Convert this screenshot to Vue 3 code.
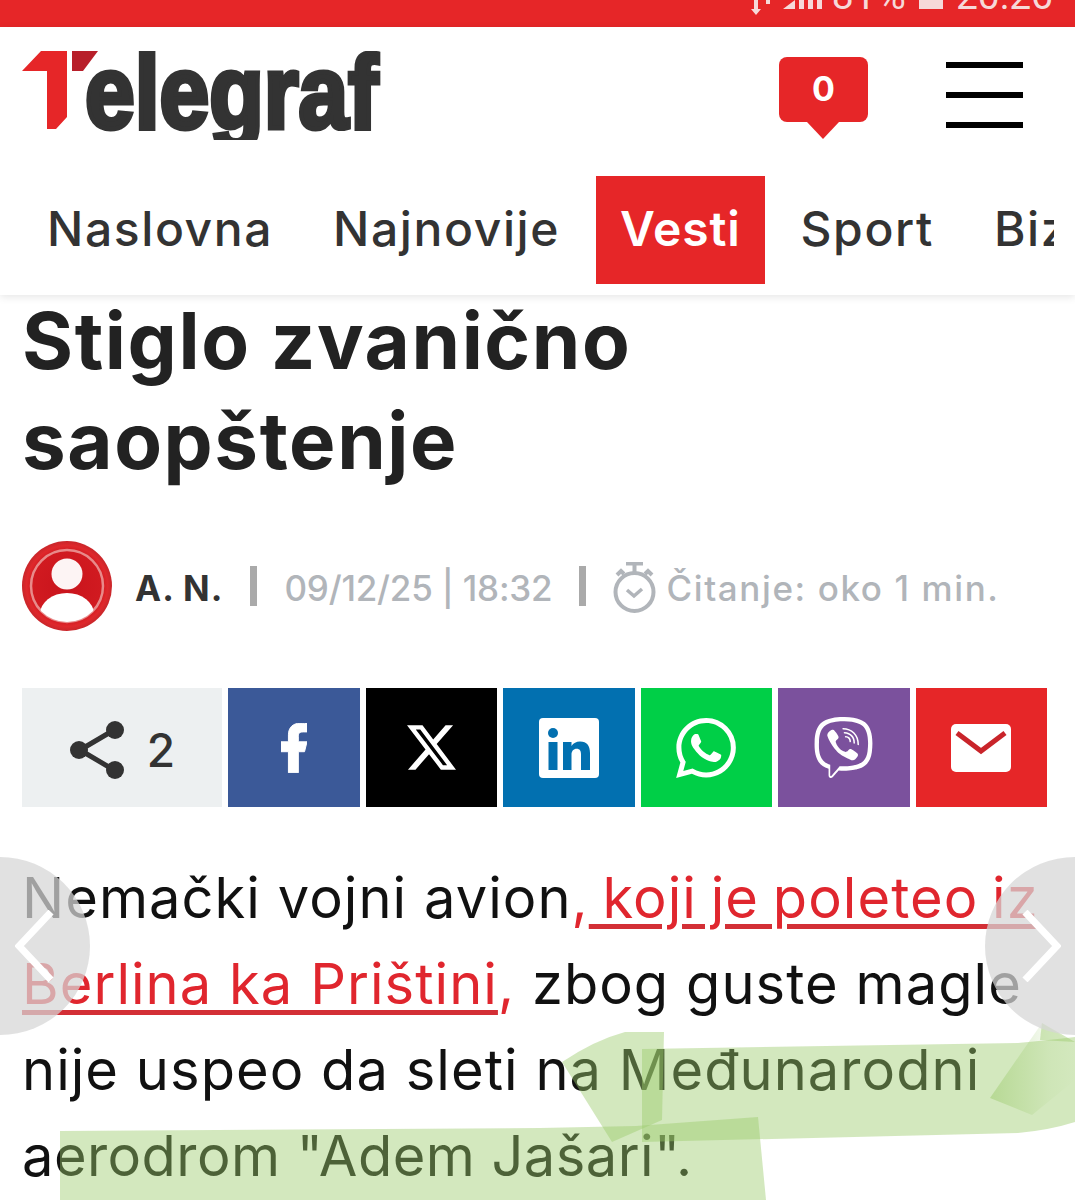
<script setup>
const navItems = [
  { label: 'Naslovna' },
  { label: 'Najnovije' },
  { label: 'Vesti', active: true },
  { label: 'Sport' },
  { label: 'Biznis' }
]
</script>

<template>
  <div class="page">
    <!-- Status bar, cut off at the top of the capture -->
    <div class="status-bar">
      <svg class="status-icons" width="76" height="27" viewBox="0 0 76 27" fill="#f6d9d9">
        <path d="M5 0h4v9h3l-5 6-5-6h3z" />
        <path d="M17 0h4v4h-4z" />
        <path d="M34 9l12-9v9z" />
        <rect x="50" y="0" width="5" height="9" />
        <rect x="59" y="0" width="5" height="9" />
        <rect x="68" y="0" width="5" height="9" />
      </svg>
      <span class="status-text percent">81 %</span>
      <span class="status-battery"></span>
      <span class="status-text">20:26</span>
    </div>

    <header class="site-header">
      <div class="top-row">
        <svg class="logo" width="370" height="89" viewBox="0 0 370 89">
          <polygon points="0,20 19,0 45,0 45,66 34,78 25,78 25,20" fill="#e62628" />
          <polygon points="50,0 76,0 61,20 50,20" fill="#b81f2a" />
          <text x="63" y="77" class="logo-text" textLength="293" lengthAdjust="spacingAndGlyphs">elegraf</text>
        </svg>
        <div class="top-actions">
          <div class="comment-badge">0</div>
          <div class="burger">
            <span></span>
            <span></span>
            <span></span>
          </div>
        </div>
      </div>

      <nav class="main-nav">
        <a v-for="item in navItems" :key="item.label" :class="['nav-item', { active: item.active }]">{{ item.label }}</a>
      </nav>
    </header>

    <main class="article">
      <h1 class="title">Stiglo zvanično<br />saopštenje</h1>

      <div class="meta">
        <svg class="avatar" width="90" height="90" viewBox="0 0 90 90">
          <defs>
            <radialGradient id="avatarFill" cx="50%" cy="50%" r="50%">
              <stop offset="0%" stop-color="#c9141c" />
              <stop offset="78%" stop-color="#d11a20" />
              <stop offset="90%" stop-color="#df282c" />
              <stop offset="100%" stop-color="#c8262a" />
            </radialGradient>
            <clipPath id="avatarClip">
              <circle cx="45" cy="45" r="36" />
            </clipPath>
          </defs>
          <circle cx="45" cy="45" r="45" fill="url(#avatarFill)" />
          <circle cx="45" cy="45" r="36" fill="none" stroke="#e88a8a" stroke-width="2.500" />
          <circle cx="45" cy="33" r="15.500" fill="#fdf4f4" />
          <ellipse cx="45" cy="73" rx="27" ry="21" fill="#fff" clip-path="url(#avatarClip)" />
        </svg>
        <span class="author">A. N.</span>
        <span class="divider"></span>
        <span class="meta-text date">09/12/25 | 18:32</span>
        <span class="divider"></span>
        <svg class="stopwatch" width="43" height="52" viewBox="0 0 43 52" fill="none" stroke="#b1b5ba" stroke-width="4">
          <circle cx="21.500" cy="30" r="19" />
          <path d="M13 1.500h17M21.500 2v9M4 13l4-4 3 3M39 13l-4-4-3 3" />
          <path d="M14 28l7 6 8-7" stroke-width="3.500" />
        </svg>
        <span class="meta-text reading">Čitanje: oko 1 min.</span>
      </div>

      <div class="share-row">
        <div class="share-count">
          <svg width="56" height="58" viewBox="0 0 56 58" fill="#333">
            <path d="M11 29L45 9M11 29l34 20" stroke="#333" stroke-width="5" />
            <circle cx="10" cy="29" r="9" />
            <circle cx="46" cy="9" r="9" />
            <circle cx="46" cy="49" r="9" />
          </svg>
          <span>2</span>
        </div>
        <div class="share-btn facebook">
          <svg width="26" height="50" viewBox="7 2 10.500 20" fill="#fff" stroke="#fff" stroke-width="0.400">
            <path d="M14 13.500h2.500l1-4H14v-2c0-1.030 0-2 2-2h1.500V2.140c-.326-.043-1.557-.14-2.857-.14C11.928 2 10 3.657 10 6.700v2.800H7v4h3V22h4z" />
          </svg>
        </div>
        <div class="share-btn twitter">
          <svg width="49" height="49" viewBox="0 0 24 24" fill="#fff">
            <path d="M18.901 1.153h3.680l-8.040 9.190L24 22.846h-7.406l-5.800-7.584-6.638 7.584H.474l8.600-9.830L0 1.154h7.594l5.243 6.932ZM17.610 20.644h2.039L6.486 3.240H4.298Z" />
          </svg>
        </div>
        <div class="share-btn linkedin">
          <svg width="60" height="60" viewBox="0 0 60 60">
            <rect width="60" height="60" rx="4" fill="#fff" />
            <circle cx="14" cy="15" r="5" fill="#0270b0" />
            <rect x="9.500" y="24" width="9" height="28" fill="#0270b0" />
            <path d="M24 24h8.500v4c1.800-3 4.800-4.600 8.500-4.600 7 0 10 4.400 10 11.600v17h-9V36.500c0-3.600-1.300-5.700-4.300-5.700-3.200 0-5.200 2.200-5.200 5.900V52H24z" fill="#0270b0" />
          </svg>
        </div>
        <div class="share-btn whatsapp">
          <svg width="60" height="60" viewBox="0 0 24 24" fill="#fff">
            <path d="M17.472 14.382c-.297-.149-1.758-.867-2.030-.967-.273-.099-.471-.148-.670.150-.197.297-.767.966-.940 1.164-.173.199-.347.223-.644.075-.297-.150-1.255-.463-2.390-1.475-.883-.788-1.480-1.761-1.653-2.059-.173-.297-.018-.458.130-.606.134-.133.298-.347.446-.520.149-.174.198-.298.298-.497.099-.198.050-.371-.025-.520-.075-.149-.669-1.612-.916-2.207-.242-.579-.487-.500-.669-.510-.173-.008-.371-.010-.570-.010-.198 0-.520.074-.792.372-.272.297-1.040 1.016-1.040 2.479 0 1.462 1.065 2.875 1.213 3.074.149.198 2.096 3.200 5.077 4.487.709.306 1.262.489 1.694.625.712.227 1.360.195 1.871.118.571-.085 1.758-.719 2.006-1.413.248-.694.248-1.289.173-1.413-.074-.124-.272-.198-.570-.347m-5.421 7.403h-.004a9.870 9.870 0 01-5.031-1.378l-.361-.214-3.741.982.998-3.648-.235-.374a9.860 9.860 0 01-1.510-5.260c.001-5.450 4.436-9.884 9.888-9.884 2.640 0 5.122 1.030 6.988 2.898a9.825 9.825 0 012.893 6.994c-.003 5.450-4.437 9.884-9.885 9.884m8.413-18.297A11.815 11.815 0 0012.050 0C5.495 0 .160 5.335.157 11.892c0 2.096.547 4.142 1.588 5.945L.057 24l6.305-1.654a11.882 11.882 0 005.683 1.448h.005c6.554 0 11.890-5.335 11.893-11.893a11.821 11.821 0 00-3.480-8.413z" />
          </svg>
        </div>
        <div class="share-btn viber">
          <svg width="61" height="61" viewBox="0 0 24 24" fill="#fff">
            <path d="M11.400 0C9.473.028 5.333.344 3.020 2.467 1.302 4.187.696 6.700.633 9.817.570 12.933.488 18.776 6.120 20.360h.003l-.004 2.416s-.037.977.610 1.177c.777.242 1.234-.500 1.980-1.302.407-.440.972-1.084 1.397-1.580 3.850.326 6.812-.416 7.150-.525.776-.252 5.176-.816 5.892-6.657.740-6.020-.360-9.830-2.340-11.546-.596-.550-3.006-2.300-8.375-2.323 0 0-.395-.025-1.037-.017zm.058 1.693c.545-.004.880.017.880.017 4.542.020 6.717 1.388 7.222 1.846 1.675 1.435 2.530 4.868 1.906 9.897v.002c-.604 4.878-4.174 5.184-4.832 5.395-.280.090-2.882.737-6.153.524 0 0-2.436 2.940-3.197 3.704-.120.120-.260.167-.352.144-.130-.033-.166-.188-.165-.414l.020-4.018c-4.762-1.320-4.485-6.292-4.430-8.895.054-2.604.543-4.738 1.996-6.173 1.960-1.773 5.474-2.018 7.110-2.030zm.380 2.602c-.167 0-.303.135-.304.302 0 .167.133.303.300.305 1.624.010 2.946.537 4.028 1.592 1.073 1.046 1.620 2.468 1.633 4.334.002.167.140.300.307.300.166-.002.300-.138.300-.304-.014-1.984-.618-3.596-1.816-4.764-1.190-1.160-2.692-1.753-4.447-1.765zm-3.960.695c-.190-.032-.400.005-.616.117l-.010.002c-.430.247-.816.562-1.146.932-.002.004-.006.004-.008.008-.267.323-.420.638-.460.948-.008.046-.010.093-.007.140 0 .136.022.270.065.400l.013.010c.135.480.473 1.276 1.205 2.604.420.768.903 1.500 1.446 2.186.270.344.560.673.870.984l.132.132c.310.308.640.600.984.870.686.543 1.418 1.027 2.186 1.447 1.328.733 2.126 1.070 2.604 1.206l.010.014c.130.042.265.064.402.063.046.002.092 0 .138-.008.310-.036.627-.190.948-.460.004 0 .003-.002.008-.005.370-.330.683-.720.930-1.148l.003-.010c.225-.432.150-.842-.180-1.120-.004 0-.698-.580-1.037-.830-.360-.255-.730-.492-1.113-.710-.510-.285-1.032-.106-1.248.174l-.447.564c-.230.283-.657.246-.657.246-3.120-.796-3.955-3.955-3.955-3.955s-.037-.426.248-.656l.563-.448c.277-.215.456-.737.170-1.248-.217-.383-.454-.756-.710-1.115-.250-.340-.826-1.033-.830-1.035-.137-.165-.310-.265-.502-.297zm4.490.880c-.158.002-.290.124-.300.282-.010.167.115.312.282.324 1.160.085 2.017.466 2.645 1.150.630.688.930 1.524.906 2.570-.002.168.130.306.300.310.166.003.305-.130.310-.297.025-1.175-.334-2.193-1.067-2.994-.740-.810-1.777-1.253-3.050-1.346h-.024zm.463 1.630c-.160.002-.290.127-.300.287-.008.167.120.310.288.320.523.028.875.175 1.113.422.240.245.388.620.416 1.164.010.167.150.295.318.287.167-.008.295-.150.287-.317-.030-.644-.215-1.178-.580-1.557-.367-.378-.893-.574-1.520-.607h-.018z" />
          </svg>
        </div>
        <div class="share-btn mail">
          <svg width="60" height="48" viewBox="0 0 60 48">
            <rect width="60" height="48" rx="5" fill="#fff" />
            <path d="M6 9l24 18L54 9" fill="none" stroke="#c9242a" stroke-width="5" />
          </svg>
        </div>
      </div>

      <p class="body-text">Nemački vojni avion<span class="link">,<u><span class="tight-words"> koji je poleteo iz</span><br />Berlina ka Prištini</u>,</span> zbog guste magle<br />nije uspeo da sleti na Međunarodni<br /><span class="last-line">aerodrom "Adem Jašari".</span></p>
    </main>

    <!-- Green marker strokes drawn over the article -->
    <svg class="marker" width="1075" height="1200" viewBox="0 0 1075 1200">
      <defs>
        <linearGradient id="markerFade" x1="0" y1="0" x2="1" y2="0">
          <stop offset="0%" stop-color="#9bca6b" stop-opacity="0.5" />
          <stop offset="70%" stop-color="#9bca6b" stop-opacity="0.08" />
          <stop offset="100%" stop-color="#9bca6b" stop-opacity="0" />
        </linearGradient>
      </defs>
      <g fill="#9bca6b" fill-opacity="0.44">
        <path d="M642 1049L1018 1043Q1050 1040 1075 1037V1122Q1050 1130 1018 1133L642 1142Z" />
        <path d="M562 1062Q595 1040 625 1032H664L662 1120L612 1142Z" />
        <path d="M60 1131L540 1128L636 1126L758 1117L766 1200H60Z" />
      </g>
      <path d="M1042 1023L1075 1045V1080L1032 1115L990 1098Z" fill="url(#markerFade)" />
      <path d="M1042 1023L1075 1042L1040 1040Z" fill="#9bca6b" fill-opacity="0.44" />
    </svg>

    <!-- Gallery arrows -->
    <div class="gallery-arrow left">
      <svg width="40" height="72" viewBox="0 0 40 72" fill="none" stroke="#fff" stroke-width="7">
        <path d="M36 2L4 36l32 34" />
      </svg>
    </div>
    <div class="gallery-arrow right">
      <svg width="40" height="72" viewBox="0 0 40 72" fill="none" stroke="#fff" stroke-width="7">
        <path d="M4 2l32 34L4 70" />
      </svg>
    </div>
  </div>
</template>

<style>
html, body {
  margin: 0;
  background: #fff;
  overflow: hidden;
}
</style>

<style scoped>
.page {
  position: relative;
  width: 1075px;
  height: 1200px;
  overflow: hidden;
  background: #fff;
  font-family: Inter, "Liberation Sans", sans-serif;
}

/* Status bar */
.status-bar {
  display: flex;
  justify-content: flex-end;
  align-items: flex-end;
  gap: 13px;
  box-sizing: border-box;
  height: 27px;
  padding: 0 22px 18px 0;
  overflow: hidden;
  background: #e62628;
}

.status-icons {
  flex: none;
  margin-bottom: -18px;
  margin-right: -6px;
}

.status-text {
  color: #f6d9d9;
  font-family: Roboto, sans-serif;
  font-size: 39px;
  line-height: 1;
  margin-bottom: -7px;
}

.percent {
  word-spacing: -8px;
}

.status-battery {
  width: 24px;
  height: 30px;
  background: #f6d9d9;
}

/* Header */
.site-header {
  position: relative;
  z-index: 1;
  padding-bottom: 11px;
  background: #fff;
  box-shadow: 0 2px 8px rgba(0, 0, 0, 0.1);
}

.top-row {
  display: flex;
  justify-content: space-between;
  align-items: flex-start;
  height: 149px;
  padding: 24px 52px 0 22px;
  box-sizing: border-box;
}

.logo-text {
  font-family: "Liberation Sans", sans-serif;
  font-weight: 700;
  font-size: 104px;
  fill: #333;
  stroke: #333;
  stroke-width: 5px;
}

.top-actions {
  display: flex;
  gap: 78px;
  padding-top: 11px;
}

.comment-badge {
  position: relative;
  width: 89px;
  height: 65px;
  margin-top: -5px;
  border-radius: 8px;
  background: #e62628;
  color: #fff;
  font-size: 34px;
  font-weight: 700;
  line-height: 64px;
  text-align: center;
}

.comment-badge::after {
  content: "";
  position: absolute;
  left: 28px;
  top: 65px;
  border-left: 16px solid transparent;
  border-right: 16px solid transparent;
  border-top: 17px solid #e62628;
}

.burger {
  display: flex;
  flex-direction: column;
  gap: 24px;
  width: 77px;
}

.burger span {
  height: 6px;
  background: #000;
}

.main-nav {
  display: flex;
  gap: 12px;
  height: 108px;
  margin-right: 21px;
  padding-left: 23px;
  overflow: hidden;
}

.nav-item {
  flex: none;
  display: flex;
  align-items: center;
  padding: 0 24px 4px;
  color: #333;
  font-size: 48px;
  font-weight: 500;
  letter-spacing: 1.600px;
}

.nav-item.active {
  background: #e62628;
  color: #fff;
  font-weight: 600;
  letter-spacing: 0.800px;
}

/* Article */
.article {
  padding: 0 28px 0 22px;
}

.title {
  margin: -4px 0 0;
  color: #222;
  font-size: 78px;
  font-weight: 700;
  line-height: 100px;
  letter-spacing: 1.600px;
}

.meta {
  display: flex;
  align-items: center;
  height: 90px;
  margin-top: 50px;
}

.avatar {
  flex: none;
  margin-right: 23px;
}

.author {
  margin: 3px 27px 0 0;
  color: #333;
  font-size: 35px;
  font-weight: 700;
  letter-spacing: 1px;
}

.divider {
  flex: none;
  width: 7px;
  height: 40px;
  background: #aaa;
}

.meta-text {
  margin-top: 4px;
  color: #b1b5ba;
  font-size: 35px;
  font-weight: 500;
  white-space: nowrap;
}

.date {
  margin-left: 27px;
  margin-right: 27px;
  letter-spacing: -0.200px;
}

.reading {
  letter-spacing: 1.600px;
}

.stopwatch {
  flex: none;
  margin: 4px 10px 0 27px;
}

.share-row {
  display: flex;
  gap: 6px;
  height: 119px;
  margin-top: 57px;
}

.share-count {
  flex: none;
  display: flex;
  align-items: center;
  justify-content: center;
  gap: 22px;
  box-sizing: border-box;
  width: 200px;
  padding-top: 5px;
  background: #edf0f1;
  color: #333;
  font-size: 46px;
  font-weight: 500;
}

.share-btn {
  flex: 1;
  display: flex;
  align-items: center;
  justify-content: center;
}

.facebook { background: #3b5998; }
.twitter { background: #000; }
.linkedin { background: #0270b0; }
.whatsapp { background: #00cf47; }
.viber { background: #7b519d; }
.mail { background: #e62628; }

.body-text {
  margin: 48px 0 0;
  color: #111;
  font-size: 56px;
  line-height: 86px;
  letter-spacing: 1.050px;
  white-space: nowrap;
}

.link {
  color: #e0262e;
}

.link u {
  text-decoration: underline 5px #d32f36;
  text-underline-offset: 6px;
}

.tight-words {
  word-spacing: -3px;
}

.last-line {
  letter-spacing: 0.450px;
}

/* Overlays */
.marker {
  position: absolute;
  left: 0;
  top: 0;
  pointer-events: none;
}

.gallery-arrow {
  position: absolute;
  top: 857px;
  display: flex;
  align-items: center;
  justify-content: center;
  width: 180px;
  height: 178px;
  border-radius: 50%;
  background: rgba(214, 214, 214, 0.73);
}

.gallery-arrow.left {
  left: -90px;
  justify-content: flex-end;
  padding-right: 35px;
  box-sizing: border-box;
}

.gallery-arrow.right {
  right: -90px;
  justify-content: flex-start;
  padding-left: 36px;
  box-sizing: border-box;
}
</style>
